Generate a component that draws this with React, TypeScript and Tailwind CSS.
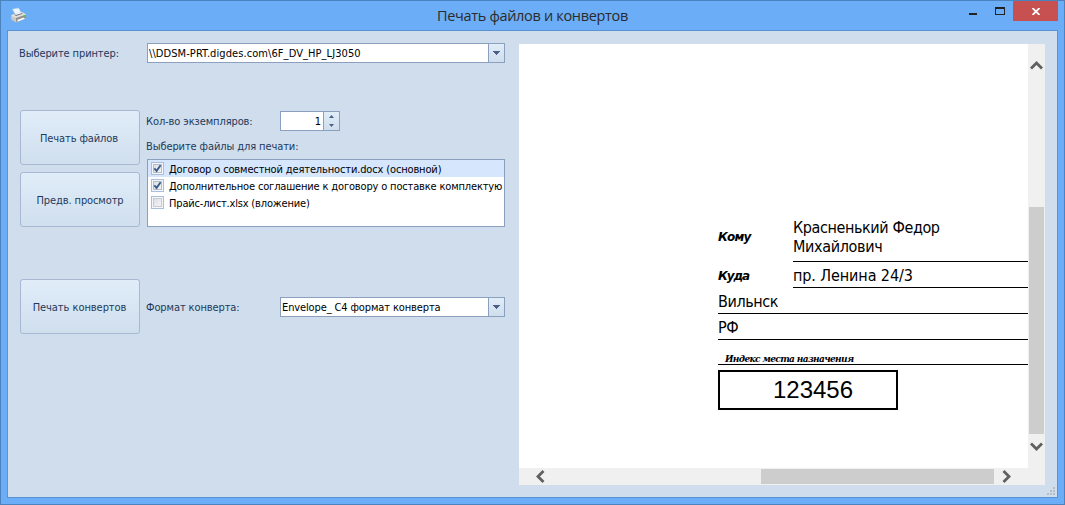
import React, { useState } from 'react';

const UI = "font-['DejaVu_Sans_Condensed','DejaVu_Sans',sans-serif] text-[11px] leading-[14px] whitespace-nowrap";

function PrinterIcon() {
  return (
    <svg width="18" height="18" viewBox="0 0 18 18">
      <path d="M2.5 2.2 L8.5 1 L11.3 6 L5.5 7.6 Z" fill="#eef7ff" stroke="#b9d5ef" strokeWidth="0.6" />
      <path d="M1 8.5 L5 6.5 L12 5 L16 7.5 L16.3 11 L6 15.5 L1.3 12.5 Z" fill="#c9c9c7" />
      <path d="M1 8.5 L5 6.5 L12 5 L16 7.5 L6 10.8 Z" fill="#e2e1de" />
      <path d="M4 7.6 L11 5.8 L13 6.8 L6 9 Z" fill="#74797d" />
      <path d="M5 6.8 L10.8 5.2 L11.6 6.2 L5.6 7.9 Z" fill="#eef7ff" />
      <path d="M6 11 L16 7.8 L16.2 11 L6 15 Z" fill="#8f8f8f" />
      <path d="M7 13 L13.5 10.6 L15 11.8 L8 14.5 Z" fill="#f8f8f6" />
      <rect x="13.5" y="8" width="2" height="1.6" fill="#62c64b" />
    </svg>
  );
}

function Arrow({ up = false, small = false }: { up?: boolean; small?: boolean }) {
  return (
    <svg width={small ? 5 : 7} height={small ? 3 : 4} viewBox="0 0 7 4" preserveAspectRatio="none" shapeRendering={small ? 'auto' : 'crispEdges'}>
      <path d={up ? 'M0 4 L3.5 0 L7 4 Z' : 'M0 0 H7 L3.5 4 Z'} fill="#4c5f88" />
    </svg>
  );
}

function Combo({ text, className, textClass }: { text: string; className: string; textClass: string }) {
  return (
    <div className={`flex h-5 border border-[#8ba0bf] bg-white ${className}`}>
      <span className={`flex-1 pt-[3px] pl-px text-black ${UI} ${textClass}`}>{text}</span>
      <button className="flex w-4 items-center justify-center border-l border-[#8ba0bf] bg-linear-to-b from-[#e1edf8] to-[#cfdeed]">
        <Arrow />
      </button>
    </div>
  );
}

function BigButton({ text, className }: { text: string; className: string }) {
  return (
    <button
      className={`h-[55px] w-[120px] rounded-[3px] border border-[#a8b8d2] bg-linear-to-b from-[#e0edf9] to-[#d0dfee] pt-[2px] text-[#1e395b] ${UI} ${className}`}
    >
      {text}
    </button>
  );
}

function FileRow({ text, initial, selected = false, textClass }: { text: string; initial: boolean; selected?: boolean; textClass: string }) {
  const [checked, setChecked] = useState(initial);
  return (
    <div className={`flex h-[17px] items-center overflow-hidden pl-[3px] ${selected ? 'bg-[#d5e6fd]' : ''}`} onClick={() => setChecked(!checked)}>
      <span className="flex size-[13px] shrink-0 items-center justify-center border border-[#a9bedb] bg-[#f4f6f9]">
        <span className={`flex size-[9px] items-center justify-center border bg-linear-to-br from-[#dcdfe3] to-[#f4f4f5] ${checked ? 'border-[#b5bdc9]' : 'border-[#c8cbd0]'}`}>
          {checked && (
            <svg width="9" height="9" viewBox="0 0 9 9" className="shrink-0">
              <path d="M1.3 4.3 L3.6 6.9 L7.6 1.2" fill="none" stroke="#3c5d8b" strokeWidth="1.9" />
            </svg>
          )}
        </span>
      </span>
      <span className={`pt-[2px] pl-[5px] text-black ${UI} ${textClass}`}>{text}</span>
    </div>
  );
}

const chevrons = {
  up: 'M1 7.5 L6.5 2 L12 7.5',
  down: 'M1 1.5 L6.5 7 L12 1.5',
  left: 'M7.5 1 L2 6.5 L7.5 12',
  right: 'M1.5 1 L7 6.5 L1.5 12',
};

function Chevron({ dir }: { dir: keyof typeof chevrons }) {
  const vertical = dir === 'up' || dir === 'down';
  return (
    <svg className="shrink-0" width={vertical ? 13 : 9} height={vertical ? 9 : 13} viewBox={vertical ? '0 0 13 9' : '0 0 9 13'}>
      <path d={chevrons[dir]} fill="none" stroke="#606060" strokeWidth="2.8" />
    </svg>
  );
}

function Envelope() {
  const value = "font-['DejaVu_Sans_Condensed','DejaVu_Sans',sans-serif] text-[16px] leading-[19px] whitespace-nowrap";
  const label = "w-[75px] shrink-0 font-['DejaVu_Sans','DejaVu_Sans_Condensed',sans-serif] text-[12px] leading-[14px] font-bold italic";
  return (
    <div className="flex-1 pt-[174px] pl-[199px] text-black">
      <div className="flex h-11">
        <span className={`${label} pt-[12px] tracking-[-0.8px]`}>Кому</span>
        <div className={`${value} flex-1 border-b border-black`}>
          <div className="tracking-[-0.4px]">Красненький Федор</div>
          <div className="tracking-[-0.35px]">Михайлович</div>
        </div>
      </div>
      <div className="flex h-[26px]">
        <span className={`${label} pt-[7px] tracking-[-1.1px]`}>Куда</span>
        <div className={`${value} flex-1 border-b border-black pt-[4px] tracking-[-0.1px]`}>пр. Ленина 24/3</div>
      </div>
      <div className={`${value} h-[26px] border-b border-black pt-[4px] tracking-[-0.4px]`}>Вильнск</div>
      <div className={`${value} h-[26px] border-b border-black pt-[4px] tracking-[-0.35px]`}>РФ</div>
      <div className="h-[25px] border-b border-black pt-[13px] pl-[7px] font-['DejaVu_Serif',serif] text-[9px] leading-[13px] font-bold whitespace-nowrap italic tracking-[-0.63px]">
        Индекс места назначения
      </div>
      <div className="mt-[5px] flex h-10 w-[180px] items-center justify-center border-2 border-black pl-[10px] font-['Liberation_Sans',sans-serif] text-[24px] leading-6">
        123456
      </div>
    </div>
  );
}

function Preview() {
  return (
    <section className="flex h-[441px] w-[526px] flex-col bg-white">
      <div className="flex h-[424px]">
        <Envelope />
        <div className="flex w-[17px] flex-col items-center bg-[#f0f0f0] pt-[17px]">
          <Chevron dir="up" />
          <div className="mt-[137px] mb-[8px] h-[227px] w-[15px] bg-[#cdcdcd]" />
          <Chevron dir="down" />
        </div>
      </div>
      <div className="flex h-[17px] items-center bg-[#f0f0f0] pl-[17px]">
        <Chevron dir="left" />
        <div className="mr-[8px] ml-[216px] h-[15px] w-[233px] bg-[#cdcdcd]" />
        <Chevron dir="right" />
      </div>
    </section>
  );
}

function Grip() {
  return (
    <svg width="8" height="8" viewBox="0 0 8 8" fill="#b8bcc3" className="absolute right-[2px] bottom-[2px]">
      <path d="M6 0h2v2h-2zM3 3h2v2h-2zM6 3h2v2h-2zM0 6h2v2h-2zM3 6h2v2h-2zM6 6h2v2h-2z" />
    </svg>
  );
}

export default function App() {
  return (
    <div className="flex h-[505px] w-[1065px] flex-col border border-[#4a83be] bg-[#6badf6] px-[6px]">
      <header className="flex h-[29px] shrink-0">
        <div className="w-[99px] pt-[6px] pl-[3px]">
          <PrinterIcon />
        </div>
        <h1 className="flex-1 pt-[4px] text-center font-['Open_Sans','Noto_Sans',sans-serif] text-[14.5px] leading-[22px] tracking-[-0.32px] text-[#2b2b2b]">
          Печать файлов и конвертов
        </h1>
        <div className="flex h-5 w-[99px]">
          <button className="flex w-[27px] items-end pb-[6px] pl-[10px]">
            <span className="h-[2px] w-2 bg-[#222]" />
          </button>
          <button className="flex w-[27px] items-center pl-[9px]">
            <svg width="10" height="8" viewBox="0 0 10 8" shapeRendering="crispEdges">
              <path d="M0 0h10v8H0z M1 2v5h8V2z" fill="#222" fillRule="evenodd" />
            </svg>
          </button>
          <button className="flex w-[45px] items-center justify-center bg-[#c75050]">
            <svg width="8" height="7" viewBox="0 0 8 7">
              <path d="M0.5 0 L7.5 7 M7.5 0 L0.5 7" stroke="#fff" strokeWidth="1.8" />
            </svg>
          </button>
        </div>
      </header>
      <main className="relative flex h-[468px] w-[1051px] shrink-0 border border-[#5b93d2] bg-[#cfdded] pt-3 pl-3 text-[#1e395b]">
        <div className="w-[499px]">
          <div className="flex h-[67px]">
            <label className={`-ml-px w-[128px] pt-[4px] tracking-[-0.1px] ${UI}`}>Выберите принтер:</label>
            <Combo text="\\DDSM-PRT.digdes.com\6F_DV_HP_LJ3050" className="w-[358px]" textClass="tracking-[0.08px]" />
          </div>
          <div className="flex h-[169px]">
            <div className="flex w-[127px] flex-col gap-[7px]">
              <BigButton text="Печать файлов" className="pr-[2px] tracking-[-0.1px]" />
              <BigButton text="Предв. просмотр" className="tracking-[-0.1px]" />
            </div>
            <div className="w-[358px]">
              <div className="flex h-[29px] pt-px">
                <label className={`-ml-px w-[134px] pt-[4px] tracking-[-0.1px] ${UI}`}>Кол-во экземпляров:</label>
                <div className="flex h-5 w-[60px] border border-[#8ba0bf] bg-white">
                  <span className={`flex-1 pt-[3px] pr-[2px] text-right text-black ${UI}`}>1</span>
                  <div className="flex w-4 flex-col items-center justify-center gap-[6px] border-l border-[#8ba0bf] bg-linear-to-b from-[#e1edf8] to-[#cfdeed]">
                    <Arrow up small />
                    <Arrow small />
                  </div>
                </div>
              </div>
              <div className={`-ml-px h-5 pt-px tracking-[-0.1px] ${UI}`}>Выберите файлы для печати:</div>
              <div className="h-[68px] overflow-hidden border border-[#8ba0bf] bg-white">
                <FileRow text="Договор о совместной деятельности.docx (основной)" initial selected textClass="tracking-[-0.14px]" />
                <FileRow text="Дополнительное соглашение к договору о поставке комплектую" initial textClass="tracking-[-0.16px]" />
                <FileRow text="Прайс-лист.xlsx (вложение)" initial={false} textClass="tracking-[-0.17px]" />
              </div>
            </div>
          </div>
          <div className="flex">
            <div className="w-[127px]">
              <BigButton text="Печать конвертов" className="pr-px tracking-[-0.05px]" />
            </div>
            <label className={`-ml-px w-[134px] pt-[22px] tracking-[-0.1px] ${UI}`}>Формат конверта:</label>
            <Combo text="Envelope_ C4 формат конверта" className="mt-[18px] w-[225px]" textClass="tracking-[-0.12px]" />
          </div>
        </div>
        <div className="pt-px">
          <Preview />
        </div>
        <Grip />
      </main>
    </div>
  );
}
